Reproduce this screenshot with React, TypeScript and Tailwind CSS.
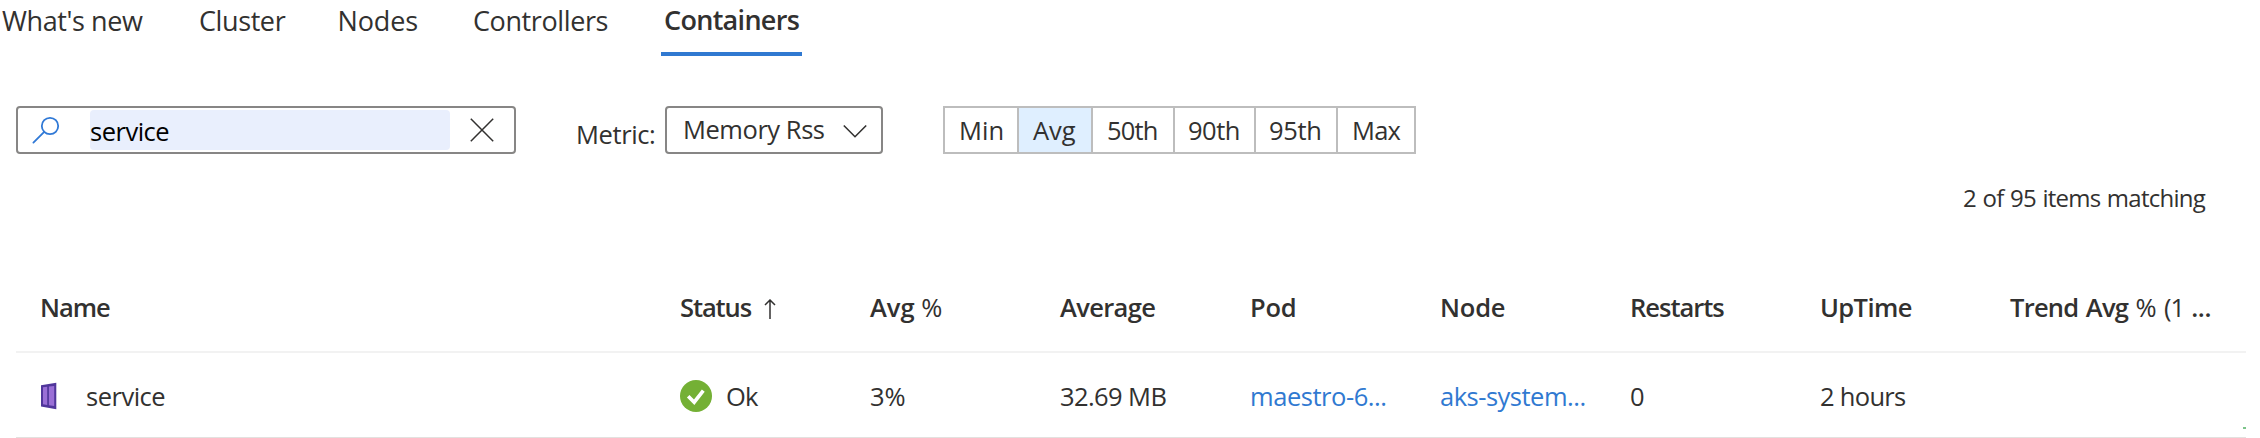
import React from "react";

const tabs = [
  { label: "What's new", className: "w-[197px] tracking-[-0.4px]" },
  { label: "Cluster", className: "w-[138.5px] tracking-[-0.4px]" },
  { label: "Nodes", className: "w-[135.5px] tracking-[-0.1px]" },
  { label: "Controllers", className: "w-[188px] tracking-[-0.4px]" },
];

const aggregations = [
  { label: "Min", className: "w-[74px] pl-[14px] tracking-[0.1px]" },
  { label: "Avg", className: "w-[74px] pl-[14px] bg-[#dfefff]" },
  { label: "50th", className: "w-[82px] pl-[14px] tracking-[-0.8px]" },
  { label: "90th", className: "w-[81px] pl-[13px] tracking-[-0.5px]" },
  { label: "95th", className: "w-[82px] pl-[13px] tracking-[-0.3px]" },
  { label: "Max", className: "w-[78px] pl-[14px] tracking-[-0.8px]" },
];

const gridColumns =
  "grid grid-cols-[640px_190px_190px_190px_190px_190px_190px_190px_1fr] pl-6 whitespace-nowrap";

function SearchIcon() {
  return (
    <svg className="ml-[13px] h-[30px] w-[30px] shrink-0" viewBox="0 0 30 30" fill="none" stroke="#3079d6" strokeWidth="1.8">
      <circle cx="19" cy="11" r="8.2" />
      <path d="M13.2 16.8 2.4 27.6" strokeLinecap="round" />
    </svg>
  );
}

function ContainerIcon() {
  return (
    <svg className="mt-[6px] h-[28px] w-[18px] shrink-0" viewBox="0 0 18 28">
      <path d="M1 3.2 16.3.8v26.4L1 24.6Z" fill="#50369b" />
      <path d="M3 5.2 7.2 4.7v18.2L3 22.3Z M8.9 4.5 14.2 3.9v20.2l-5.3-.9Z" fill="#9a6fd6" />
    </svg>
  );
}

function OkIcon() {
  return (
    <svg className="h-8 w-8 shrink-0" viewBox="0 0 32 32" fill="none">
      <circle cx="16" cy="16" r="16" fill="#74b035" />
      <path d="m8.2 16.2 6 6L23.3 10.6" stroke="#fff" strokeWidth="3.6" />
    </svg>
  );
}

export default function App() {
  return (
    <div className="h-[438px] w-[2260px] overflow-hidden bg-white font-['Open_Sans',sans-serif] text-[25.5px] leading-[40px] text-[#323130]">
      <nav className="flex h-[56px] pl-[2px] text-[27px] whitespace-nowrap">
        {tabs.map((tab) => (
          <div key={tab.label} className={`shrink-0 pt-[1px] ${tab.className}`}>
            {tab.label}
          </div>
        ))}
        <div className="h-[56px] w-[141px] border-b-4 border-[#3079d1] pl-[3px] font-semibold tracking-[-0.7px]">
          Containers
        </div>
      </nav>

      <div className="mt-[50px] flex h-12 pl-4 whitespace-nowrap">
        <div className="flex w-[500px] items-center rounded-[4px] border-2 border-[#878685]">
          <SearchIcon />
          <div className="ml-[29px] h-10 w-[360px] rounded-[4px] bg-[#e9effd] pt-px tracking-[-0.5px] text-black">
            service
          </div>
          <svg className="ml-[20px] h-6 w-6" viewBox="0 0 24 24" fill="none" stroke="#323130" strokeWidth="1.5">
            <path d="m.8.8 22.4 22.4M23.2.8.8 23.2" />
          </svg>
        </div>
        <div className="w-[149px] pt-2 pl-[60px] tracking-[-0.4px]">Metric:</div>
        <div className="flex w-[218px] rounded-[4px] border-2 border-[#878685]">
          <div className="w-[175.5px] pt-[1px] pl-[16px] tracking-[-0.45px]">Memory Rss</div>
          <svg className="mt-[16px] h-[14px] w-[24px]" viewBox="0 0 24 14" fill="none" stroke="#323130" strokeWidth="1.6">
            <path d="M.8 1.5 12 12.7 23.2 1.5" />
          </svg>
        </div>
        <div className="ml-[60px] flex border-r-2 border-[#bdbdbd]">
          {aggregations.map((item) => (
            <div key={item.label} className={`border-y-2 border-l-2 border-[#bdbdbd] pt-[2px] ${item.className}`}>
              {item.label}
            </div>
          ))}
        </div>
      </div>

      <div className="mt-[24px] mr-[55px] h-10 text-right text-[24px] tracking-[-0.75px] [word-spacing:1px]">2 of 95 items matching</div>

      <section className="ml-4 w-[2230px]">
        <div className={`mt-[69px] h-[66px] border-b-2 border-[#f2f2f2] font-semibold ${gridColumns}`}>
          <div className="tracking-[-1px]">Name</div>
          <div className="flex tracking-[-1.1px]">
            Status
            <svg className="mt-[12px] ml-[12.5px] h-[21px] w-[12px]" viewBox="0 0 12 21" fill="none" stroke="#323130" strokeWidth="1.5">
              <path d="M6 20V1M1 6l5-5 5 5" />
            </svg>
          </div>
          <div>
            Avg <span className="font-normal">%</span>
          </div>
          <div className="tracking-[-0.65px]">Average</div>
          <div className="tracking-[-0.2px]">Pod</div>
          <div className="tracking-[-0.2px]">Node</div>
          <div className="tracking-[-1px]">Restarts</div>
          <div className="tracking-[-0.6px]">UpTime</div>
          <div className="tracking-[-0.75px] [word-spacing:1.5px]">
            Trend Avg <span className="font-normal tracking-[-0.4px]">% </span>
            <span className="font-medium tracking-[-1px]">(1 </span>
            <span className="tracking-[-0.3px]">...</span>
          </div>
        </div>
        <div className={`h-[85px] border-b border-[#e3e1df] pt-[23px] ${gridColumns}`}>
          <div className="flex items-start tracking-[-0.5px]">
            <ContainerIcon />
            <span className="ml-[28px]">service</span>
          </div>
          <div className="flex tracking-[-0.9px]">
            <div className="pt-1">
              <OkIcon />
            </div>
            <span className="ml-[14px]">Ok</span>
          </div>
          <div>3%</div>
          <div className="tracking-[-0.6px]">32.69 MB</div>
          <div className="tracking-[-0.45px] text-[#3079d1]">maestro-6...</div>
          <div className="tracking-[-0.5px] text-[#3079d1]">aks-system...</div>
          <div>0</div>
          <div className="tracking-[-0.7px]">2 hours</div>
          <div className="flex justify-end pt-[51px]">
            <div className="h-[2px] w-[3px] bg-[#7cc48a]" />
          </div>
        </div>
      </section>
    </div>
  );
}
